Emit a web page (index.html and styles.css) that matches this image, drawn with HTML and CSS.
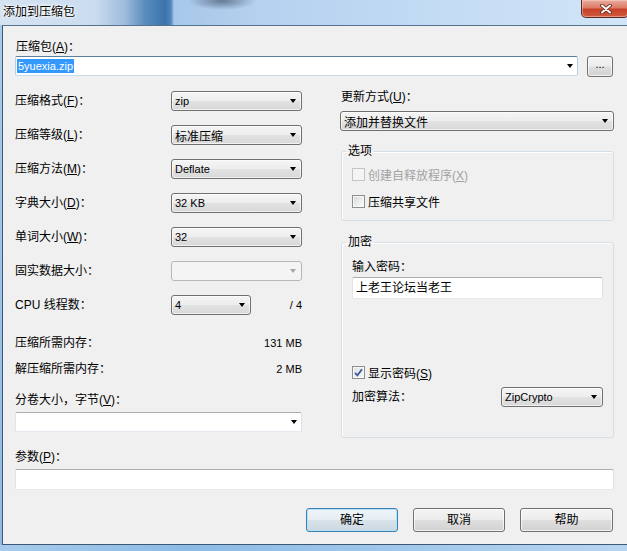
FILE: index.html
```html
<!DOCTYPE html>
<html lang="zh-CN">
<head>
<meta charset="utf-8">
<title>添加到压缩包</title>
<link rel="stylesheet" href="styles.css">
</head>
<body>
<div class="window">
  <div class="titlebar">
    <span class="title">添加到压缩包</span>
    <div class="close-btn">
      <svg width="12" height="10" viewBox="0 0 12 10"><path d="M2 1.5 L10 8.5 M10 1.5 L2 8.5" stroke="#5a2018" stroke-width="3.6" stroke-linecap="round"/><path d="M2 1.5 L10 8.5 M10 1.5 L2 8.5" stroke="#fff" stroke-width="2" stroke-linecap="round"/></svg>
    </div>
  </div>
  <div class="client">
    <div class="label top-label">压缩包(<u>A</u>)：</div>
    <div class="archive-row">
      <div class="edit-combo focused archive-combo"><span class="sel latin">5yuexia.zip</span><i class="arrow"></i></div>
      <div class="btn browse">...</div>
    </div>

    <div class="columns">
      <div class="left-col">
        <div class="form-row"><span class="label">压缩格式(<u>F</u>)：</span><div class="combo w131"><span class="latin">zip</span><i class="arrow"></i></div></div>
        <div class="form-row"><span class="label">压缩等级(<u>L</u>)：</span><div class="combo w131"><span>标准压缩</span><i class="arrow"></i></div></div>
        <div class="form-row"><span class="label">压缩方法(<u>M</u>)：</span><div class="combo w131"><span class="latin">Deflate</span><i class="arrow"></i></div></div>
        <div class="form-row"><span class="label">字典大小(<u>D</u>)：</span><div class="combo w131"><span class="latin">32 KB</span><i class="arrow"></i></div></div>
        <div class="form-row"><span class="label">单词大小(<u>W</u>)：</span><div class="combo w131"><span class="latin">32</span><i class="arrow"></i></div></div>
        <div class="form-row"><span class="label">固实数据大小：</span><div class="combo w131 disabled"><span></span><i class="arrow"></i></div></div>
        <div class="form-row cpu-row"><span class="label">CPU 线程数：</span><div class="combo w80"><span class="latin">4</span><i class="arrow"></i></div><span class="latin cpu-total">/ 4</span></div>
        <div class="mem-row mem1"><span>压缩所需内存：</span><span class="latin">131 MB</span></div>
        <div class="mem-row mem2"><span>解压缩所需内存：</span><span class="latin">2 MB</span></div>
        <div class="label vol-label">分卷大小，字节(<u>V</u>)：</div>
        <div class="edit-combo vol-combo"><span></span><i class="arrow"></i></div>
      </div>

      <div class="right-col">
        <div class="label update-label">更新方式(<u>U</u>)：</div>
        <div class="combo update-combo"><span>添加并替换文件</span><i class="arrow"></i></div>

        <fieldset class="group options">
          <legend>选项</legend>
          <div class="check-row disabled-text"><span class="cb cb-disabled"></span><span>创建自释放程序(<u>X</u>)</span></div>
          <div class="check-row row2"><span class="cb"></span><span>压缩共享文件</span></div>
        </fieldset>

        <fieldset class="group encrypt">
          <legend>加密</legend>
          <div class="label">输入密码：</div>
          <div class="textbox password">上老王论坛当老王</div>
          <div class="check-row show-pass"><span class="cb checked"><svg width="9" height="9" viewBox="0 0 9 9"><path d="M1 4.8 L3.4 7.4 L8 1.2" fill="none" stroke="#3a5a9c" stroke-width="1.8"/></svg></span><span>显示密码(<u>S</u>)</span></div>
          <div class="algo-row"><span class="label">加密算法：</span><div class="combo algo-combo"><span class="latin">ZipCrypto</span><i class="arrow"></i></div></div>
        </fieldset>
      </div>
    </div>

    <div class="label param-label">参数(<u>P</u>)：</div>
    <div class="textbox param"></div>

    <div class="buttons">
      <div class="btn default-btn">确定</div>
      <div class="btn">取消</div>
      <div class="btn help">帮助</div>
    </div>
  </div>
  <div class="frame-bottom"></div>
</div>
</body>
</html>
```

FILE: styles.css
```css
* { box-sizing: border-box; }

body {
  margin: 0;
  width: 627px;
  height: 551px;
  overflow: hidden;
  font-family: "Liberation Sans", "Noto Sans CJK SC", sans-serif;
  font-size: 12px;
  color: #000;
}

u { text-decoration: underline; text-underline-offset: 1px; }

.latin { font-size: 11px; }

.window {
  width: 627px;
  height: 551px;
  display: flex;
  flex-direction: column;
  background: linear-gradient(180deg, #a9cbea, #8fbbe4);
}

.titlebar {
  position: relative;
  height: 25px;
  flex: none;
  display: flex;
  align-items: center;
  background:
    radial-gradient(ellipse 34px 9px at 222px 1px, rgba(55, 68, 92, 0.6), rgba(55, 68, 92, 0) 100%),
    linear-gradient(90deg, #d4e3f2 0px, #cadcef 95px, #9dbcdc 125px, #5a8dbe 145px, #3b74aa 165px, #4f86bb 171px, #a7c7e9 174px, #b5d1ef 260px, #c4dcf4 450px, #d2e5f8 627px);
}

.title {
  padding-left: 3px;
  line-height: 14px;
  margin-top: -1px;
  text-shadow: 0 0 5px #fff, 0 0 3px #fff, 0 0 2px #fff;
}

.close-btn {
  position: absolute;
  left: 581px;
  top: 0;
  width: 48px;
  height: 18px;
  border: 1px solid #5e2620;
  border-top: none;
  border-radius: 0 0 5px 5px;
  background: linear-gradient(180deg, #e9ad9f 0%, #dd7b65 45%, #c7402a 55%, #d15a3e 100%);
  box-shadow: inset 0 0 0 1px rgba(255, 220, 210, 0.45);
  display: flex;
  align-items: center;
  justify-content: flex-start;
  padding-left: 18px;
}

.client {
  flex: 1;
  margin-left: 2px;
  border-left: 1px solid #3d5874;
  border-top: 1px solid #55738f;
  border-bottom: 1px solid #3d5874;
  background: #f0f0f0;
  padding: 14px 13px 0 12px;
  display: flex;
  flex-direction: column;
}

.frame-bottom {
  height: 6px;
  flex: none;
  background: linear-gradient(90deg, #a7cbeb, #8dbbe5 30%, #b7d5f1);
}

.label { line-height: 14px; white-space: nowrap; }

.top-label { padding-left: 1px; }

.archive-row {
  margin-top: 1px;
  height: 22px;
  display: flex;
  align-items: center;
  gap: 9px;
  padding-right: 1px;
}

/* Editable combo / text boxes */
.edit-combo, .textbox {
  background: #fff;
  border: 1px solid;
  border-color: #abadb3 #dbdfe6 #e3e9ef #e2e3ea;
  border-radius: 2px;
}

.edit-combo {
  height: 20px;
  display: flex;
  align-items: center;
  justify-content: space-between;
  padding: 0 4px 0 1px;
}

.edit-combo.focused {
  border-color: #5c7f9e #b5cfe7 #c5dcf0 #b5cfe7;
}

.archive-combo { width: 563px; }

.sel {
  background: #3399ff;
  color: #fff;
  line-height: 14px;
  padding: 0 1px;
}

.arrow {
  display: block;
  width: 0;
  height: 0;
  border-left: 3.5px solid transparent;
  border-right: 3.5px solid transparent;
  border-top: 4px solid #000;
}

.btn {
  height: 24px;
  border: 1px solid #707070;
  border-radius: 3px;
  background: linear-gradient(180deg, #f4f4f4 0%, #ececec 48%, #dedede 52%, #d2d2d2 100%);
  box-shadow: inset 0 0 0 1px rgba(255, 255, 255, 0.7);
  display: flex;
  align-items: center;
  justify-content: center;
  line-height: 14px;
}

.browse {
  width: 26px;
  height: 21px;
  font-size: 11px;
  padding-bottom: 4px;
}

/* Columns */
.columns {
  margin-top: 14px;
  display: grid;
  grid-template-columns: 287px 274px;
  column-gap: 38px;
  align-items: start;
}

.left-col, .right-col {
  display: flex;
  flex-direction: column;
}

.form-row {
  height: 20px;
  display: flex;
  align-items: center;
  justify-content: space-between;
  margin-bottom: 14px;
}

.cpu-row {
  display: grid;
  grid-template-columns: 156px 80px 1fr;
  margin-bottom: 0;
}

.cpu-total { text-align: right; padding-right: 0; }

.combo {
  height: 20px;
  border: 1px solid #707070;
  border-radius: 3px;
  background: linear-gradient(180deg, #f5f5f5 0%, #ededed 48%, #e2e2e2 52%, #d8d8d8 100%);
  box-shadow: inset 0 0 0 1px rgba(255, 255, 255, 0.65);
  display: flex;
  align-items: center;
  justify-content: space-between;
  padding: 0 5px 0 3px;
  white-space: nowrap;
}

.w131 { width: 131px; }
.w80 { width: 80px; }

.combo.disabled {
  border-color: #b5b8ba;
  background: #f4f4f4;
  box-shadow: none;
}
.combo.disabled .arrow { border-top-color: #a6a6a6; }

.mem-row {
  line-height: 14px;
  display: flex;
  justify-content: space-between;
}
.mem1 { margin-top: 21px; }
.mem2 { margin-top: 12px; }

.vol-label { margin-top: 17px; }
.vol-combo { margin-top: 5px; width: 287px; }

.right-col { margin-top: -1px; }

.update-label { padding-left: 1px; }
.update-combo { margin-top: 7px; width: 274px; }

.group {
  margin: 0 0 0 1px;
  width: 273px;
  min-width: 0;
  border: 1px solid #d5dfe5;
  border-radius: 3px;
  box-shadow: inset 1px 1px 0 #fff;
  padding: 9px 10px 12px 10px;
}

.group legend {
  padding: 0 2px;
  margin-left: -6px;
  line-height: 14px;
}

.options { margin-top: 13px; }

.check-row {
  height: 14px;
  display: flex;
  align-items: center;
  gap: 3px;
  white-space: nowrap;
}
.row2 { margin-top: 13px; }

.disabled-text { color: #a2a2a2; }

.cb {
  width: 13px;
  height: 13px;
  flex: none;
  border: 1px solid #8e8f8f;
  background: linear-gradient(135deg, #d2d5d9 0%, #eceef0 55%, #fbfbfb 100%);
  box-shadow: inset 0 0 0 1px #f6f6f6;
  display: flex;
  align-items: center;
  justify-content: center;
}
.cb-disabled {
  border-color: #c4c4c4;
  background: #f4f4f4;
  box-shadow: none;
}
.cb.checked { background: linear-gradient(135deg, #dfe2e6, #f8f8f8); }

.encrypt {
  margin-top: 14px;
  padding: 11px 10px 30px 10px;
}

.password {
  margin-top: 3px;
  height: 22px;
  padding-left: 3px;
  line-height: 20px;
  font-size: 12px;
}

.show-pass { margin-top: 66px; }

.algo-row {
  margin-top: 8px;
  height: 20px;
  display: flex;
  align-items: center;
  justify-content: space-between;
}

.algo-combo { width: 102px; }

.param-label { margin-top: 12px; }

.param {
  margin-top: 5px;
  height: 21px;
}

.buttons {
  margin-top: 18px;
  display: flex;
  justify-content: flex-end;
  gap: 15px;
  padding-right: 1px;
}

.buttons .btn { width: 92px; }
.buttons .help { width: 93px; }

.default-btn {
  border-color: #3c7fb1;
  box-shadow: inset 0 0 0 1px #b8e3f7, 0 0 0 0 transparent;
  background: linear-gradient(180deg, #eef5fa 0%, #e6eef4 48%, #d8e2ea 52%, #ccd8e2 100%);
}
```
